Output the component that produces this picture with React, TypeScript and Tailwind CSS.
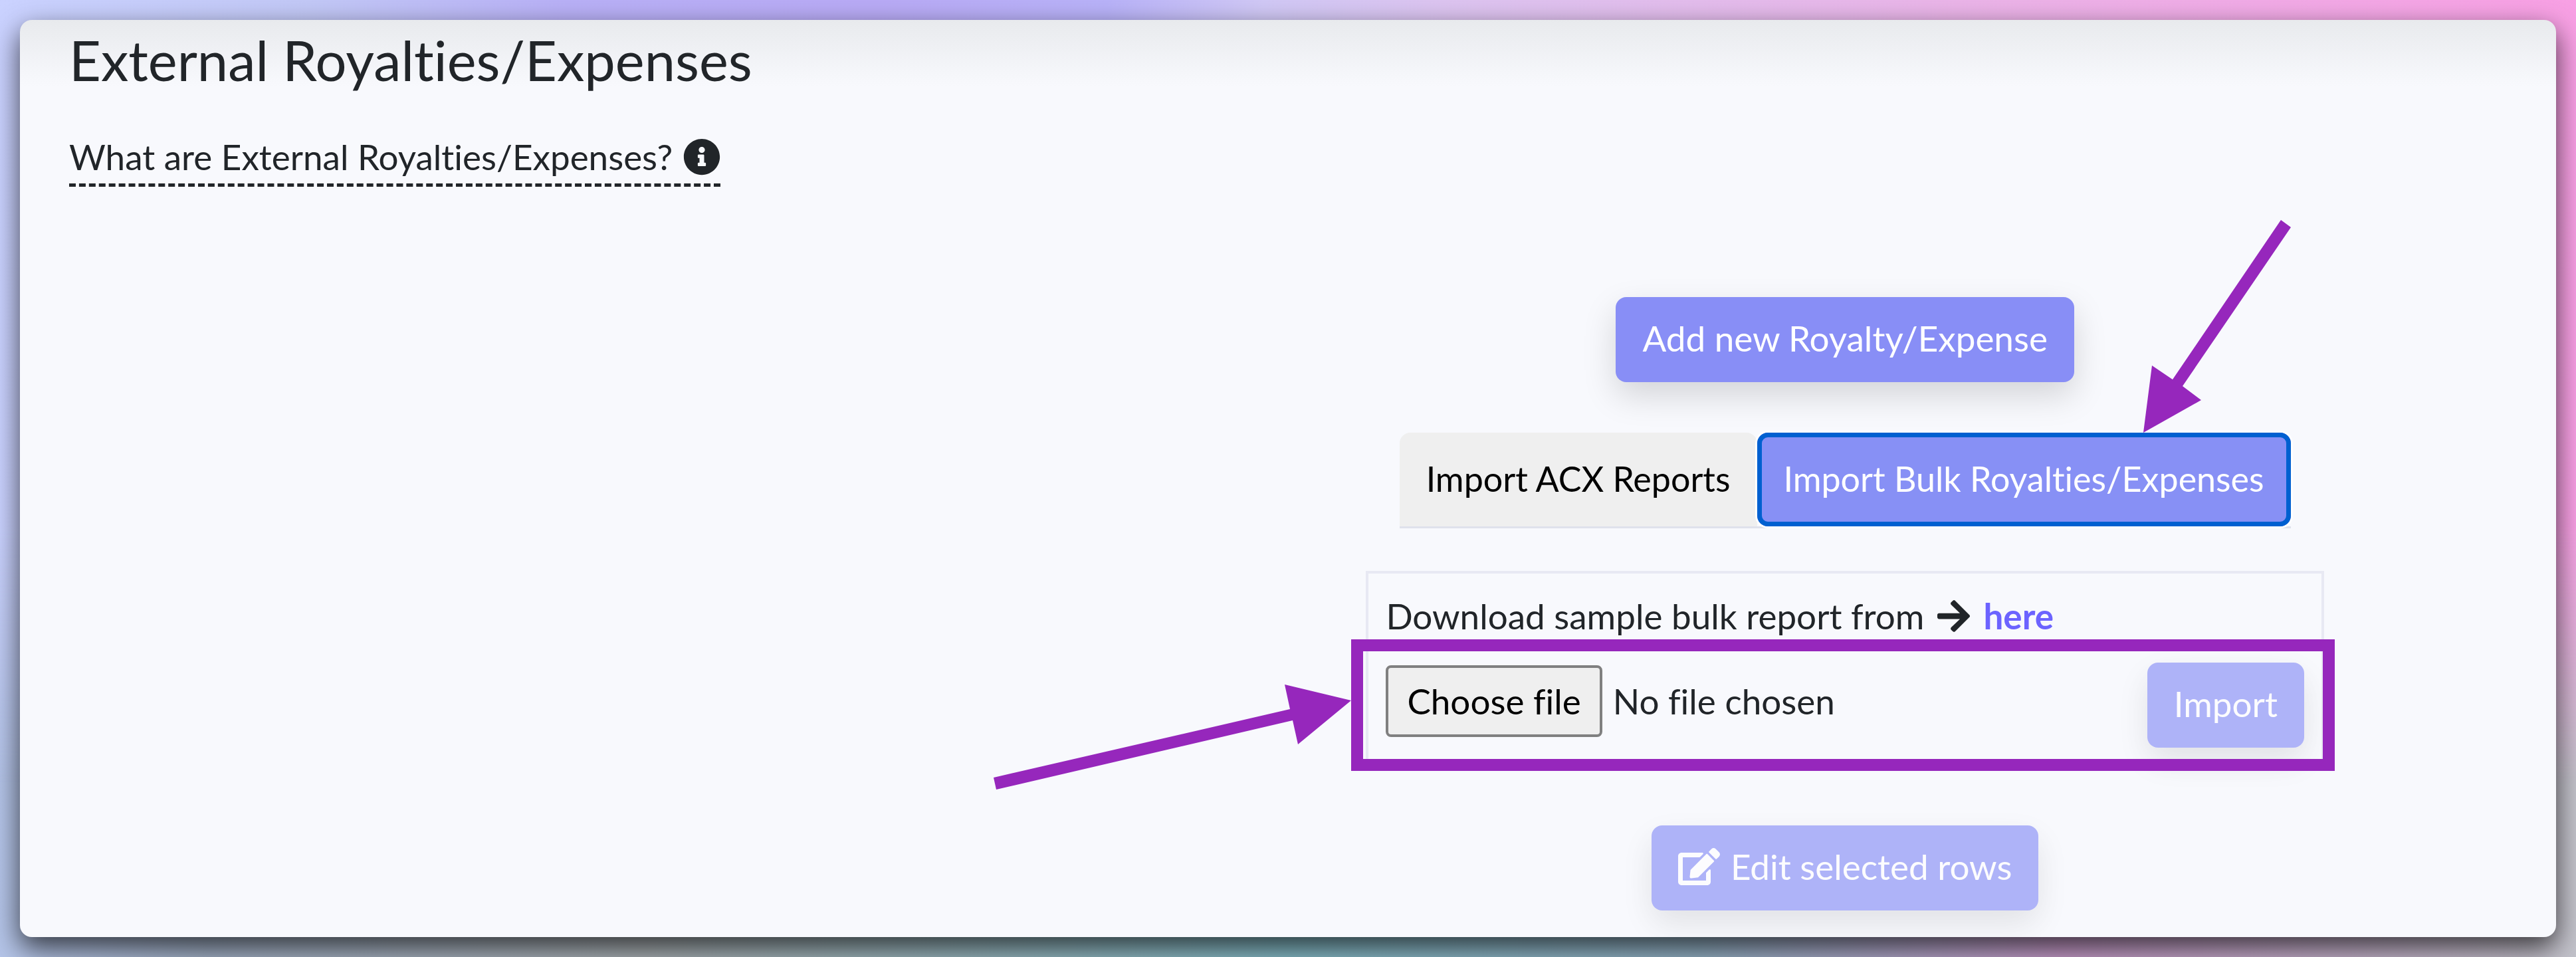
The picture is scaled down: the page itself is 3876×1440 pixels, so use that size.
import React, { useState } from 'react';
import { FaArrowRight, FaEdit, FaInfoCircle } from 'react-icons/fa';

type ImportTab = 'acx' | 'bulk';

const PrimaryButton: React.FC<{
  children: React.ReactNode;
  disabled?: boolean;
  onClick?: () => void;
}> = ({ children, disabled, onClick }) => (
  <button
    type="button"
    disabled={disabled}
    onClick={onClick}
    className="flex items-center gap-4 whitespace-nowrap rounded-2xl bg-[#888ef6] px-10 pt-[30px] pb-[34px] text-white shadow-[0_20px_50px_rgba(0,0,0,0.15)] disabled:opacity-65"
  >
    {children}
  </button>
);

const TabButton: React.FC<{
  label: string;
  active: boolean;
  onClick: () => void;
  children?: React.ReactNode;
}> = ({ label, active, onClick, children }) => (
  <button
    type="button"
    role="tab"
    aria-selected={active}
    onClick={onClick}
    className={
      active
        ? 'relative whitespace-nowrap rounded-2xl bg-[#8790f5] px-10 pt-[37px] pb-10 text-white shadow-[inset_0_0_0_7px_#0060d0,0_0_0_3px_#ffffff]'
        : 'relative whitespace-nowrap rounded-t-2xl bg-[#efefef] px-10 pt-[37px] pb-10 text-black'
    }
  >
    {label}
    {children}
  </button>
);

// Arrow pointing down at the active tab
const TabArrow = () => (
  <svg
    viewBox="0 0 222 320"
    className="pointer-events-none absolute right-0 bottom-full h-[320px] w-[222px] fill-[#9627bc]"
    aria-hidden="true"
  >
    <path d="M207 0 L222 11 L59 250 L87 271 L0 320 L13 219 L44 240 Z" />
  </svg>
);

// Arrow pointing right at the file row
const FileArrow = () => (
  <svg
    viewBox="0 0 538 158"
    className="pointer-events-none absolute top-[68px] right-full h-[158px] w-[538px] fill-[#9627bc]"
    aria-hidden="true"
  >
    <path d="M0 140 L446 37 L438 0 L538 24 L458 90 L450 54 L4 158 Z" />
  </svg>
);

export default function App() {
  const [tab, setTab] = useState<ImportTab>('bulk');
  const [file, setFile] = useState<File | null>(null);

  return (
    <div className="relative flex min-h-screen bg-[linear-gradient(to_right,#b4c4e8_0%,#a3b2c8_8%,#a9b0b4_25%,#86bcc8_50%,#93b0c4_66%,#c59ac8_80%,#c3c3cb_100%)] p-[30px] font-['Lato',sans-serif] text-[53px] leading-[64px] text-[#212529] [font-variant-ligatures:none] before:absolute before:inset-0 before:bg-[linear-gradient(to_right,#cad2ff_0%,#c2c8f6_12%,#b8b0f6_22%,#b8aaf5_34%,#b8b2f8_43%,#d0c8f5_49%,#dcc4f0_56%,#eab4e8_76%,#f8a0e4_100%)] before:[mask-image:linear-gradient(to_bottom,black_55%,transparent_82%)]">
      <main className="relative flex-1 overflow-hidden rounded-[18px] bg-[#f8f9fd] bg-[linear-gradient(to_bottom,#e8eaed,#f8f9fd_100px)] px-[74px] pt-[10px] pb-9 shadow-[0_16px_40px_rgba(0,0,0,0.7)]">
        <h1 className="text-[83px] leading-[100px]">External Royalties/Expenses</h1>
        <a
          href="#about"
          className="mt-16 inline-flex items-center gap-4 border-b-5 border-dashed border-[#212529] pb-2"
        >
          What are External Royalties/Expenses?
          <FaInfoCircle size={56} />
        </a>

        <div className="mt-[166px] mr-[7.5%] ml-auto flex w-[39.3%] flex-col items-center">
          <PrimaryButton>Add new Royalty/Expense</PrimaryButton>

          <div role="tablist" className="mt-[76px] flex border-b-3 border-[#dfe2ec] text-[52px]">
            <TabButton label="Import ACX Reports" active={tab === 'acx'} onClick={() => setTab('acx')} />
            <TabButton
              label="Import Bulk Royalties/Expenses"
              active={tab === 'bulk'}
              onClick={() => setTab('bulk')}
            >
              <TabArrow />
            </TabButton>
          </div>

          <section className="mt-16 w-full border-4 border-[#e8e9f3] px-[26px] pt-8 pb-5">
            <p className="flex items-center gap-5">
              Download sample bulk report from
              <FaArrowRight className="h-14 w-[49px]" />
              <a href="#sample" className="font-bold text-[#6c63ff]">
                here
              </a>
            </p>

            <div className="relative mt-[38px] flex items-start justify-between">
              <div className="flex items-center gap-4 pt-1">
                <input
                  id="bulk-file"
                  type="file"
                  className="sr-only"
                  onChange={(e) => setFile(e.target.files?.[0] ?? null)}
                />
                <label
                  htmlFor="bulk-file"
                  className="cursor-pointer rounded-lg border-4 border-[#808080] bg-[#efefef] px-7 py-[18px] text-black"
                >
                  Choose file
                </label>
                <span>{file ? file.name : 'No file chosen'}</span>
              </div>
              <PrimaryButton disabled={!file}>Import</PrimaryButton>

              {/* Highlight round the file row */}
              <div className="pointer-events-none absolute -top-[35px] -right-[46px] -bottom-[35px] -left-[52px] border-[18px] border-[#9627bc]" />
              <div className="pointer-events-none absolute -top-[35px] -left-[52px]">
                <FileArrow />
              </div>
            </div>
          </section>

          <div className="mt-[93px]">
            <PrimaryButton disabled>
              <FaEdit className="h-14 w-[63px]" />
              Edit selected rows
            </PrimaryButton>
          </div>
        </div>
      </main>
    </div>
  );
}
